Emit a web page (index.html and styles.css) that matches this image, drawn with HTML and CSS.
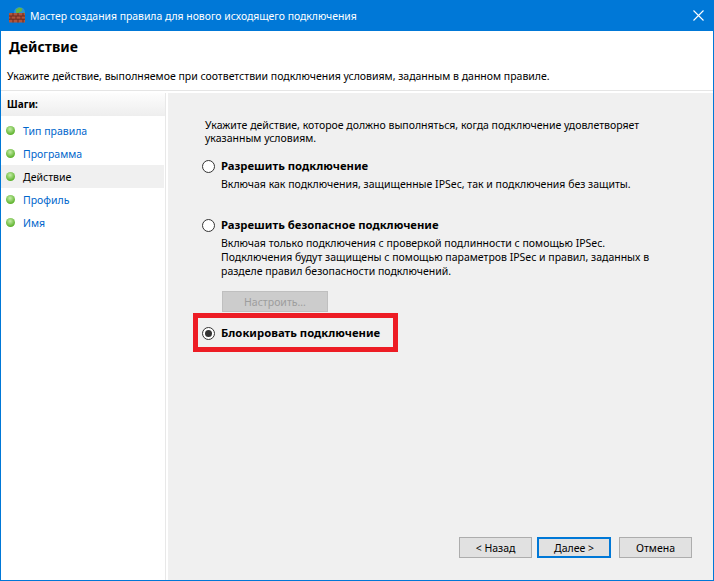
FILE: index.html
```
<!DOCTYPE html>
<html lang="ru">
<head>
<meta charset="utf-8">
<title>Мастер создания правила</title>
<link rel="stylesheet" href="styles.css">
</head>
<body>
<div class="window">
  <div class="titlebar">
    <svg class="app-icon" width="16" height="16" viewBox="0 0 16 16">
      <circle cx="10.5" cy="5.5" r="5.5" fill="#2f8fd0"/>
      <path d="M7 2.5l3-2 3.5 1-1 3-2 .5-1.5 1.5-2-1z" fill="#62b544"/>
      <path d="M12.5 7l2.5-2 .8 1.5-1.3 1.5z" fill="#62b544"/>
      <rect x="0" y="6" width="16" height="9.5" fill="#b0553c"/>
      <path d="M0 9h16M0 12.2h16M4 6v3M9 6v3M14 6v3M2 9v3M7 9v3M12 9v3M4 12v3.5M9 12v3.5M14 12v3.5" stroke="#6b2a1e" stroke-width="1" fill="none"/>
    </svg>
    <span class="title">Мастер создания правила для нового исходящего подключения</span>
    <svg class="close" width="11" height="11" viewBox="0 0 11 11"><path d="M0.5 0.5l10 10M10.5 0.5l-10 10" stroke="#fff" stroke-width="1.1" fill="none"/></svg>
  </div>
  <div class="header">
    <h1>Действие</h1>
    <p>Укажите действие, выполняемое при соответствии подключения условиям, заданным в данном правиле.</p>
  </div>
  <div class="body">
    <aside class="steps">
      <div class="steps-head">Шаги:</div>
      <ul>
        <li><i></i><a>Тип правила</a></li>
        <li><i></i><a>Программа</a></li>
        <li class="current"><i></i><a>Действие</a></li>
        <li><i></i><a>Профиль</a></li>
        <li><i></i><a>Имя</a></li>
      </ul>
    </aside>
    <main class="panel">
      <div class="content">
        <p class="intro">Укажите действие, которое должно выполняться, когда подключение удовлетворяет указанным условиям.</p>
        <div class="option opt1">
          <span class="radio"></span>
          <div>
            <div class="label">Разрешить подключение</div>
            <div class="desc">Включая как подключения, защищенные IPSec, так и подключения без защиты.</div>
          </div>
        </div>
        <div class="option opt2">
          <span class="radio"></span>
          <div>
            <div class="label">Разрешить безопасное подключение</div>
            <div class="desc">Включая только подключения с проверкой подлинности с помощью IPSec. Подключения будут защищены с помощью параметров IPSec и правил, заданных в разделе правил безопасности подключений.</div>
            <button class="btn setup" disabled>Настроить...</button>
          </div>
        </div>
        <div class="option opt3">
          <span class="radio on"></span>
          <div class="label">Блокировать подключение</div>
          <span class="marker"></span>
        </div>
      </div>
      <div class="actions">
        <button class="btn">&lt; Назад</button>
        <button class="btn primary">Далее &gt;</button>
        <button class="btn cancel">Отмена</button>
      </div>
    </main>
  </div>
</div>
</body>
</html>
```
FILE: styles.css
```
* { box-sizing: border-box; }
html, body { margin: 0; padding: 0; }
body { width: 714px; height: 581px; overflow: hidden; font-family: "Noto Sans", sans-serif; font-size: 10.5px; color: #000; background: #fff; }
.window { width: 714px; height: 581px; display: flex; flex-direction: column; border: 1px solid #0078d7; border-top: 0; background: #fff; }
.titlebar { height: 31px; flex: none; margin: 0 -1px; background: #0078d7; color: #fff; display: flex; align-items: center; padding: 0 10px 0 9px; }
.app-icon { flex: none; margin: -1px 5px 0 0; }
.title { font-size: 10.4px; flex: 1; color: #fff; }
.close { flex: none; margin-top: -1px; }
.header { height: 60px; flex: none; padding: 7px 0 0 6px; border-bottom: 1px solid #e5e5e5; }
.header h1 { margin: 0 0 0 2px; font-size: 14px; line-height: 18px; font-weight: 700; }
.header p { margin: 13px 0 0; line-height: 15px; white-space: nowrap; }
.body { flex: 1; display: flex; gap: 2px; padding-top: 2px; min-height: 0; }
.steps { width: 165px; flex: none; background: #fff; border-right: 1px solid #e8e8e8; }
.steps-head { height: 23px; padding: 2px 0 0 6px; font-size: 10px; font-weight: 700; line-height: 18px; background: linear-gradient(#fdfdfd, #eeeeee); }
.steps ul { list-style: none; margin: 3px 0 0; padding: 0; }
.steps li { height: 23px; display: flex; align-items: center; padding-left: 5px; margin-right: 1px; }
.steps li i { width: 9px; height: 9px; border-radius: 50%; background: radial-gradient(circle at 45% 35%, #c6eda8, #5fb32f 70%); margin-right: 8px; }
.steps li a { color: #0066cc; }
.steps li.current { background: #f0f0f0; }
.steps li.current a { color: #000; }
.panel { flex: 1; background: #f0f0f0; display: flex; flex-direction: column; justify-content: space-between; min-width: 0; }
.content { padding: 26px 0 0 34px; }
.intro { margin: 0 0 0 3px; line-height: 13px; width: 445px; }
.option { display: flex; align-items: flex-start; position: relative; }
.opt1 { margin-top: 13px; }
.opt2 { margin-top: 26px; }
.opt3 { margin-top: 13px; align-items: center; height: 15px; }
.radio { width: 13px; height: 13px; flex: none; margin: 2px 6px 0 0; border: 1px solid #333; border-radius: 50%; background: #fff; position: relative; }
.radio.on::after { content: ""; position: absolute; left: 2px; top: 2px; width: 7px; height: 7px; border-radius: 50%; background: #333; }
.label { font-size: 11.3px; font-weight: 700; line-height: 15px; }
.desc { margin-top: 4px; line-height: 14px; width: 435px; }
.btn { font: inherit; font-size: 10.5px; height: 21px; width: 73px; border: 1px solid #adadad; background: #e1e1e1; color: #000; padding: 0; }
.btn.setup { display: block; width: 106px; margin: 13px 0 0 1px; color: #9d9d9d; background: #cccccc; border-color: #bfbfbf; }
.btn.primary { border: 2px solid #0078d7; width: 74px; }
.marker { position: absolute; left: -9px; top: -12px; width: 205px; height: 39px; border: 5px solid #ed1c24; }
.actions { display: flex; justify-content: flex-end; gap: 5px; padding-right: 21px; padding-bottom: 22px; }
.btn.cancel { margin-left: 3px; }
```
